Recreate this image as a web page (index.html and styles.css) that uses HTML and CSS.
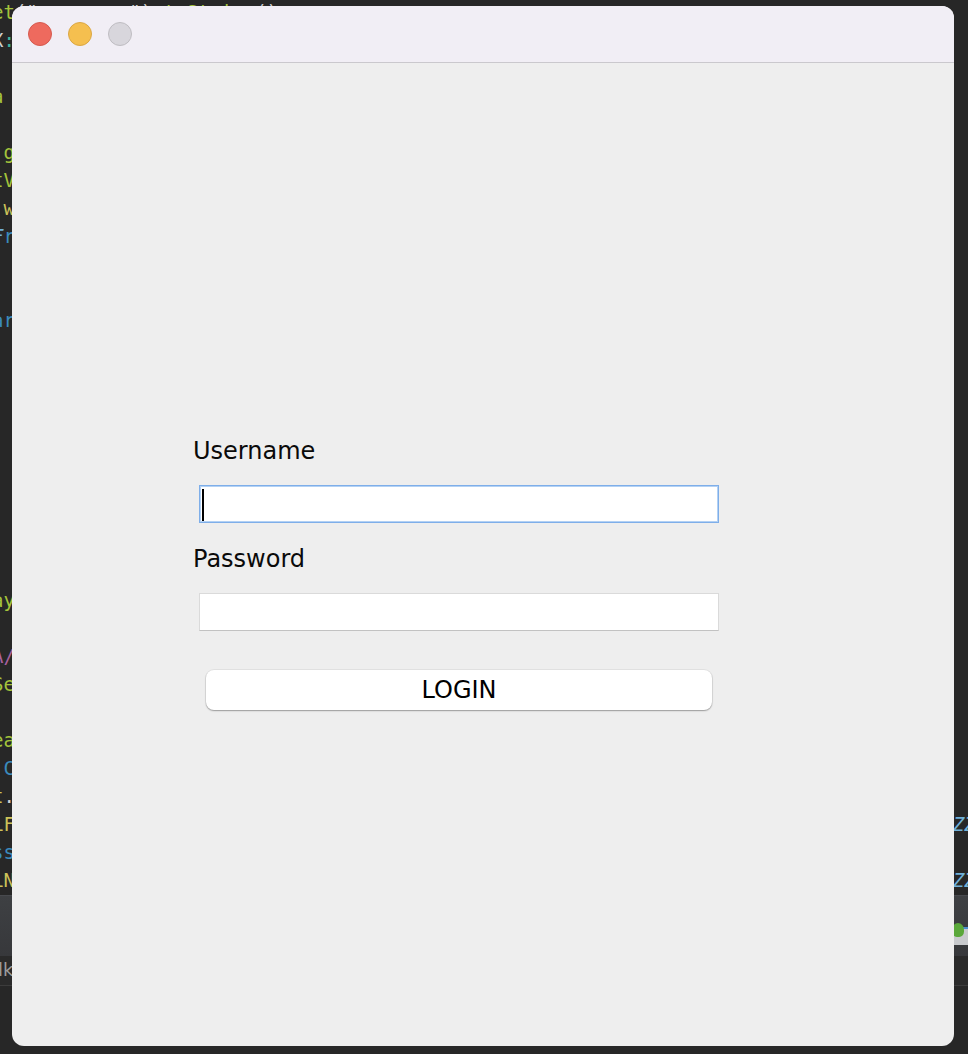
FILE: index.html
```html
<!DOCTYPE html>
<html lang="en">
<head>
<meta charset="utf-8">
<title>Login</title>
<link rel="stylesheet" href="styles.css">
</head>
<body>
<div class="desktop">
  <pre class="code"><span class="g">et</span><span class="w">("</span><span class="g">username</span><span class="w">").</span><span class="g">toString</span><span class="w">()</span>
<span class="w">X</span><span class="t">:</span>

<span class="g">a</span> <span class="w">-</span>

<span class="w">.</span><span class="g">g</span>
<span class="g">tV</span>
 <span class="y">w</span>
<span class="lb">F</span><span class="b">r</span>


<span class="b">ar</span>









<span class="g">ay</span>

<span class="p">A/</span>
<span class="g">Se</span>

<span class="g">ea</span>
 <span class="b">C</span>
<span class="y">t</span><span class="w">.</span>
<span class="y">LF</span>                                                                                  <span class="lb">ZZ</span>
<span class="b">ss</span>
<span class="y">LN</span>                                                                                  <span class="lb">ZZ</span></pre>
  <div class="toolbar">
    <div class="tool-tab"><span class="tool-icon"></span></div>
  </div>
  <div class="status">lk</div>

  <div class="window">
    <div class="titlebar">
      <span class="light red"></span>
      <span class="light yellow"></span>
      <span class="light gray"></span>
    </div>
    <div class="content">
      <form class="login">
        <label class="field-label">Username</label>
        <div class="input focused"><span class="caret"></span></div>
        <label class="field-label second">Password</label>
        <div class="input"></div>
        <button type="button" class="btn">LOGIN</button>
      </form>
    </div>
  </div>
</div>
</body>
</html>
```
FILE: styles.css
```css
* { box-sizing: border-box; }

html, body {
  margin: 0;
  padding: 0;
  height: 100%;
}

body {
  background: #272727;
  overflow: hidden;
  font-family: "DejaVu Sans", "Noto Sans", sans-serif;
}

.desktop {
  position: relative;
  width: 968px;
  height: 1054px;
  overflow: hidden;
}

/* background code editor */
.code {
  margin: -2px 0 0 -8px;
  height: 897px;
  overflow: hidden;
  font-family: "DejaVu Sans Mono", monospace;
  font-size: 19px;
  line-height: 28px;
  color: #cfcfcf;
  white-space: pre;
}

.code .g { color: #a4c43c; }
.code .w { color: #cfcfcf; }
.code .t { color: #3fb4a0; }
.code .y { color: #cdc35a; }
.code .b { color: #3b8bbd; }
.code .lb { color: #6fb0d8; font-style: italic; }
.code .p { color: #a8619e; }

.toolbar {
  height: 61px;
  background: linear-gradient(#3e4043, #37383b);
  border-top: 1px solid #484a4e;
  display: flex;
  justify-content: flex-end;
  padding-top: 31px;
}

.tool-tab {
  width: 20px;
  height: 18px;
  background: #c8cacd;
  border-top: 2px solid #4a8fd0;
}

.tool-icon {
  display: block;
  width: 12px;
  height: 14px;
  margin: -6px 0 0 4px;
  border-radius: 50% 50% 40% 40%;
  background: #5aa83a;
}

.status {
  height: 30px;
  background: #2a2a2a;
  border-bottom: 1px solid #3c3c3c;
  color: #9c9c9c;
  font-size: 18px;
  line-height: 28px;
  margin-left: -2px;
}

/* window */
.window {
  position: absolute;
  left: 12px;
  top: 6px;
  width: 942px;
  height: 1040px;
  border-radius: 12px;
  overflow: hidden;
  background: #eeeeee;
  display: flex;
  flex-direction: column;
}

.titlebar {
  height: 57px;
  flex: none;
  background: #f1eef5;
  border-bottom: 1px solid #cac8cd;
  display: flex;
  align-items: center;
  gap: 16px;
  padding-left: 16px;
}

.light {
  width: 24px;
  height: 24px;
  border-radius: 50%;
  display: block;
}

.light.red { background: #ee6a5e; border: 1px solid #d65a4f; }
.light.yellow { background: #f5bf4f; border: 1px solid #dba744; }
.light.gray { background: #d8d6dc; border: 1px solid #bfbdc2; }

.content {
  flex: 1;
  padding: 374px 0 0 181px;
}

.login {
  display: flex;
  flex-direction: column;
  align-items: flex-start;
}

.field-label {
  font-size: 24px;
  line-height: 28px;
  color: #0a0a0a;
}

.field-label.second {
  margin-top: 22px;
}

.input {
  margin: 20px 0 0 6px;
  width: 520px;
  height: 38px;
  background: #ffffff;
  border: 1px solid #dadada;
  border-bottom-color: #c2c2c2;
}

.input.focused {
  border: 1px solid #7eaee9;
  box-shadow: inset 0 0 0 1px #b3d1f4;
  padding: 3px 0 0 2px;
}

.caret {
  display: block;
  width: 2px;
  height: 32px;
  background: #000;
}

.btn {
  margin: 39px 0 0 13px;
  width: 506px;
  height: 40px;
  padding: 0;
  border: none;
  border-radius: 8px;
  background: #ffffff;
  box-shadow: 0 0 0 1px rgba(0, 0, 0, 0.05), 0 1px 1.5px rgba(0, 0, 0, 0.32);
  font-family: "DejaVu Sans", "Noto Sans", sans-serif;
  font-size: 24px;
  line-height: 40px;
  color: #000;
}
```
